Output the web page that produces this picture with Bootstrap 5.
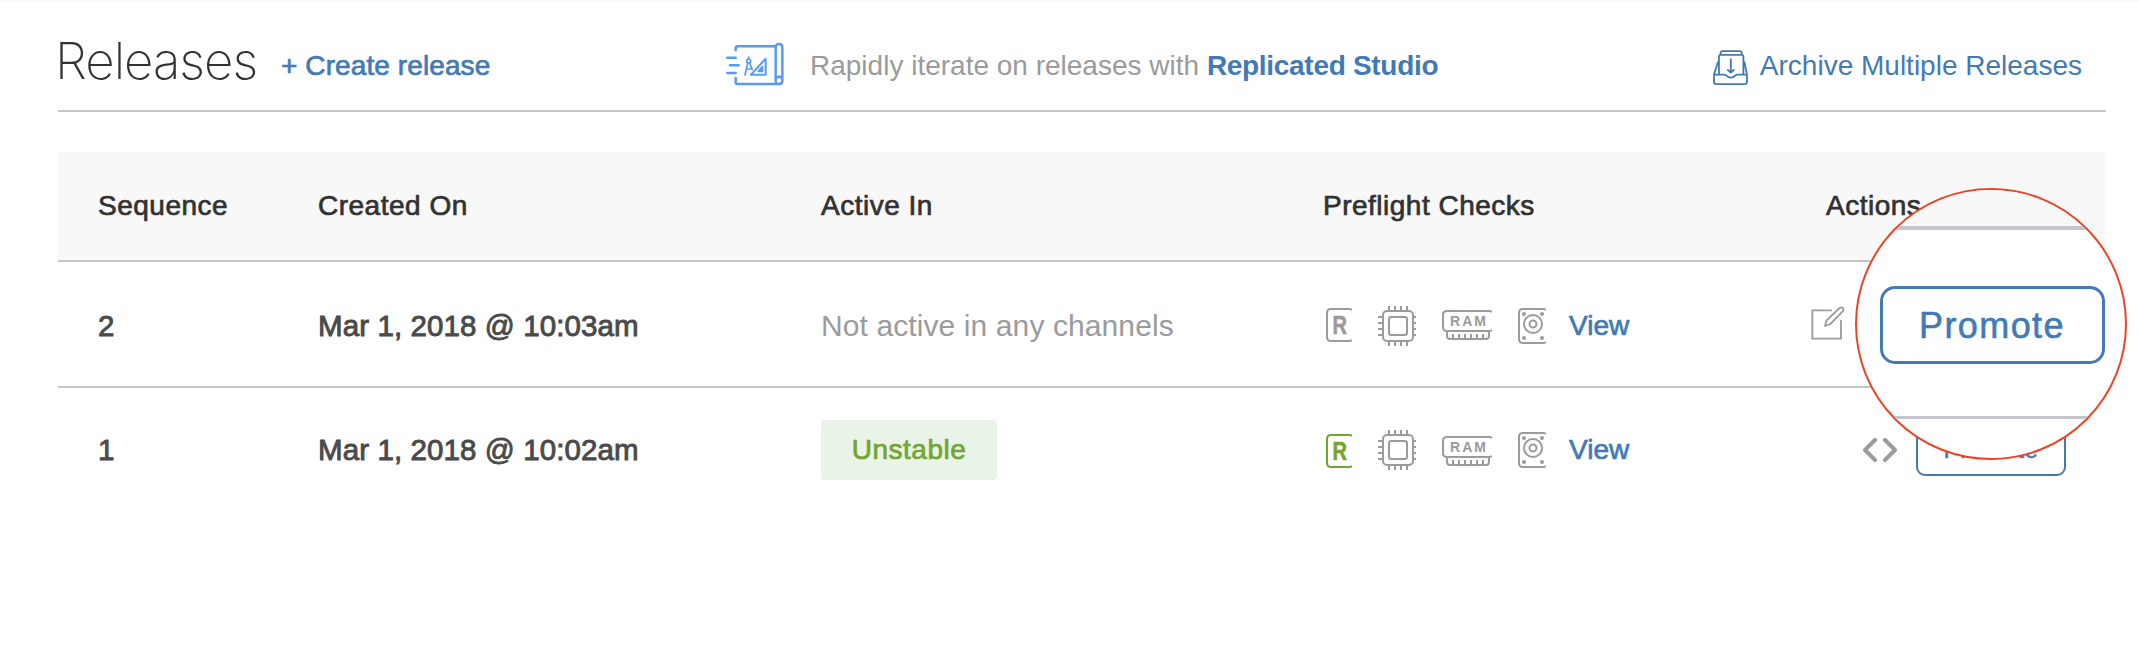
<!DOCTYPE html>
<html lang="en">
<head>
<meta charset="utf-8">
<title>Releases</title>
<link rel="stylesheet" href="https://cdn.jsdelivr.net/npm/bootstrap@5.3.0/dist/css/bootstrap.min.css">
<style>
:root { --ink-blue: #437ab6; --rule: #c3c7cb; --muted: #9b9b9b; }
body { font-family: "Liberation Sans", Arial, sans-serif; font-size: 28px; line-height: 32px; color: #323232; background: #fff; border-top: 2px solid #fafafa; height: 646px; overflow: hidden; }
svg { display: block; flex: none; fill: none; stroke: currentColor; }
.page { margin: 0 32px 0 58px; }
.topbar { height: 110px; border-bottom: 2px solid var(--rule); padding: 0 24px 0 0; }
.title { font-family: Inter, "Liberation Sans", sans-serif; font-weight: 200; font-size: 51px; line-height: 60px; letter-spacing: -1px; width: 226px; margin: 29px 0 0 -3px; }
.medium { -webkit-text-stroke: .7px currentColor; letter-spacing: .5px; }
.blue { color: var(--ink-blue); text-decoration: none; }
.gray { color: var(--muted); }
.create { width: 445px; margin-top: 48px; letter-spacing: .1px; }
.promo { margin-top: 40px; }
.promo p { margin: 8px 0 0 26px; }
.promo a { letter-spacing: -.3px; }
.archive { margin-top: 48px; }
.releases { margin-top: 40px; }
.line { display: grid; grid-template-columns: 220px 503px 502px 503px 1fr; align-items: center; padding: 0 40px; height: 124px; position: relative; }
.line + .line { border-top: 2px solid var(--rule); height: 126px; }
.line.heads { background: #f8f8f8; height: 108px; }
.line.newest { padding-top: 4px; }
.when { font-size: 29.5px; letter-spacing: .1px; color: #4a4a4a; -webkit-text-stroke: .9px currentColor; }
.none { font-size: 30px; letter-spacing: .1px; }
.channel { background: #e9f3e8; color: #73a533; border-radius: 4px; width: 176px; height: 60px; }
.checks { gap: 26px; padding-left: 3px; }
.checks a { margin-left: -3px; letter-spacing: 0; }
.newest .nudge { margin-top: -2px; }
.older .nudge { margin-top: 2px; }
.edit { margin: -7px 0 0 -15px; }
.passed { color: #73a533; }
.promote { border: 2px solid var(--ink-blue); border-radius: 9px; width: 150px; height: 52px; font-size: 24px; padding: 0; margin-left: 19px; color: var(--ink-blue); letter-spacing: .6px; -webkit-text-stroke: .5px currentColor; }
.lens { position: absolute; z-index: 2; left: 1797px; top: -74px; width: 272px; height: 272px; border: 2px solid #ee4425; border-radius: 50%; overflow: hidden; background: #fff; }
.lens .above { height: 40px; background: #f8f8f8; border-bottom: 4px solid var(--rule); }
.lens .middle { height: 189px; border-bottom: 3px solid var(--rule); }
.lens .big { width: 225px; height: 78px; border: 3px solid var(--ink-blue); border-radius: 15px; font-size: 36px; letter-spacing: 1.4px; color: var(--ink-blue); -webkit-text-stroke: .6px currentColor; margin: 4px 0 0 2px; padding: 1px 0 0; }
</style>
</head>
<body>
<svg width="0" height="0" class="position-absolute">
  <defs>
    <g id="i-cpu" stroke-width="2">
      <rect x="5" y="5" width="30" height="30" rx="4"/><rect x="11" y="11" width="18" height="18" rx="2"/>
      <path d="M11 0v4M17 0v4M23 0v4M29 0v4M11 36v4M17 36v4M23 36v4M29 36v4M0 11h4M0 17h4M0 23h4M0 29h4M36 11h2M36 17h2M36 23h2M36 29h2"/>
    </g>
    <g id="i-ram" stroke-width="2">
      <path d="M50 2Q49 1 47 1H5Q1 1 1 5V17Q1 21 5 21H47Q49 21 50 20M5 21V26Q5 29 8 29H44Q47 29 47 26V21M11 24v5M17 24v5M23 24v5M29 24v5M35 24v5M41 24v5"/>
      <text x="8" y="16" font-size="14" font-weight="700" textLength="36" fill="currentColor" stroke="none">RAM</text>
    </g>
    <g id="i-disk" stroke-width="2">
      <path d="M28 2Q27 1 25 1H5Q1 1 1 5V31Q1 35 5 35H25Q27 35 28 34"/>
      <circle cx="15" cy="16" r="9"/><circle cx="15" cy="16" r="3.5"/>
      <g fill="currentColor" stroke="none"><circle cx="6" cy="6" r="2"/><circle cx="24" cy="6" r="2"/><circle cx="6" cy="30" r="2"/><circle cx="24" cy="30" r="2"/></g>
    </g>
    <g id="i-rep" stroke-width="2">
      <path d="M26 2Q25 1 23 1H5Q1 1 1 5V29Q1 33 5 33H23Q25 33 26 32"/>
      <text x="6.5" y="26" font-size="25.5" font-weight="700" textLength="14.5" lengthAdjust="spacingAndGlyphs" fill="currentColor" stroke="currentColor" stroke-width=".6">R</text>
    </g>
    <path id="i-code" d="M12 2L2 12L12 22M22 2L32 12L22 22" stroke-width="4" stroke-linecap="round" stroke-linejoin="round"/>
  </defs>
</svg>
<main class="page">
  <header class="topbar d-flex align-items-start">
    <h1 class="title">Releases</h1>
    <a class="create blue medium" href="#">+ Create release</a>
    <div class="promo d-flex align-items-start">
      <svg width="58" height="45" viewBox="33 20 174 135" color="#559bf7" stroke-width="7.5" stroke-linecap="round" stroke-linejoin="round">
        <path d="M62 45V38Q62 33 68 33H180M62 128V140Q62 146 68 146H192Q202 146 202 136V36Q202 26 192 26Q182 26 182 36V134M182 134Q181 146 192 146M184 128Q192 120 200 128M37 67H62M45 90H71M37 113H62"/>
        <path d="M108 118H152V70ZM130 108H142V94Z" stroke-width="6"/>
        <path d="M101 65V70M98 84L90 119M104 84L112 102M94 101H108" stroke-width="5"/><circle cx="101" cy="77" r="6" stroke-width="5"/>
      </svg>
      <p class="gray">Rapidly iterate on releases with <a class="blue fw-bold" href="#">Replicated Studio</a></p>
    </div>
    <a class="archive blue d-flex ms-auto" href="#">
      <svg class="me-2" width="35" height="36" viewBox="69 89 106 108" stroke-width="5.5" stroke-linejoin="round" stroke-linecap="round">
        <path d="M92 102V97Q92 92 98 92H150Q156 92 156 97V102M87 162V108Q87 103 93 103H155Q161 103 161 108V162M84 125L72 163V185Q72 192 79 192H165Q172 192 172 185V163L164 125M72 163H103Q109 163 111 167Q115 172 123 172Q131 172 135 167Q137 163 143 163H172M123 116V154M114 149L123 157L132 149"/>
      </svg>
      <span class="ps-1">Archive Multiple Releases</span>
    </a>
  </header>

  <section class="releases">
    <div class="line heads medium">
      <div>Sequence</div><div>Created On</div><div>Active In</div><div>Preflight Checks</div><div>Actions</div>
    </div>
    <div class="line newest">
      <div class="when">2</div>
      <div class="when">Mar 1, 2018 @ 10:03am</div>
      <div class="none gray">Not active in any channels</div>
      <div class="checks gray d-flex align-items-center">
        <svg class="nudge" width="26" height="34"><use href="#i-rep"/></svg>
        <svg width="38" height="40"><use href="#i-cpu"/></svg>
        <svg class="nudge" width="50" height="30"><use href="#i-ram"/></svg>
        <svg width="28" height="36"><use href="#i-disk"/></svg>
        <a class="blue medium" href="#">View</a>
      </div>
      <div class="gray">
        <svg class="edit" width="34" height="34" viewBox="92 406 102 102" stroke-width="5.5" stroke-linejoin="round" stroke-linecap="round">
          <path d="M153 419H96V504H182V450M134 466L138 450L178 412Q184 408 188 413Q191 418 187 422L149 461Z"/>
        </svg>
      </div>
      <div class="lens">
        <div class="above"></div>
        <div class="middle d-flex align-items-center justify-content-center">
          <button class="big btn" type="button">Promote</button>
        </div>
      </div>
    </div>
    <div class="line older">
      <div class="when">1</div>
      <div class="when">Mar 1, 2018 @ 10:02am</div>
      <div><span class="channel medium d-flex align-items-center justify-content-center">Unstable</span></div>
      <div class="checks gray d-flex align-items-center">
        <svg class="nudge passed" width="26" height="34"><use href="#i-rep"/></svg>
        <svg width="38" height="40"><use href="#i-cpu"/></svg>
        <svg class="nudge" width="50" height="30"><use href="#i-ram"/></svg>
        <svg width="28" height="36"><use href="#i-disk"/></svg>
        <a class="blue medium" href="#">View</a>
      </div>
      <div class="gray d-flex align-items-center justify-content-end">
        <svg width="34" height="24"><use href="#i-code"/></svg>
        <button class="promote btn" type="button">Promote</button>
      </div>
    </div>
  </section>
</main>
<script src="https://cdn.jsdelivr.net/npm/bootstrap@5.3.0/dist/js/bootstrap.bundle.min.js"></script>
</body>
</html>
